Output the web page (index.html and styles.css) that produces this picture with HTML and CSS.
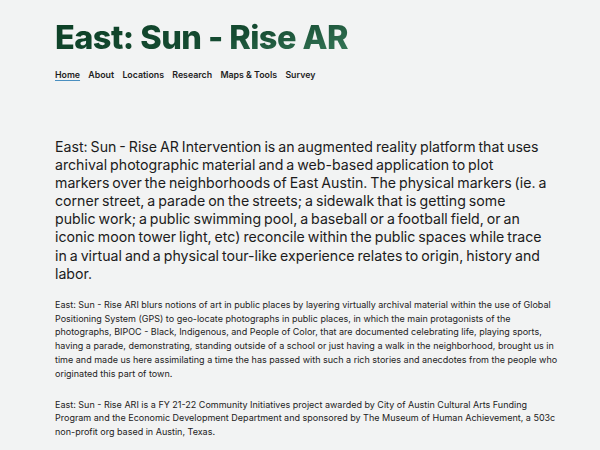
FILE: index.html
```html
<!DOCTYPE html>
<html lang="en">
<head>
<meta charset="utf-8">
<title>East: Sun - Rise AR</title>
<link rel="stylesheet" href="styles.css">
</head>
<body>
<div class="page">
  <header class="header">
    <h1 class="title">East: Sun - Rise AR</h1>
    <nav class="nav">
      <a class="nav-link active" href="#">Home</a>
      <a class="nav-link" href="#">About</a>
      <a class="nav-link" href="#">Locations</a>
      <a class="nav-link" href="#">Research</a>
      <a class="nav-link" href="#">Maps &amp; Tools</a>
      <a class="nav-link" href="#">Survey</a>
    </nav>
  </header>
  <main class="content">
    <p class="lead">East: Sun - Rise AR Intervention is an augmented reality platform that uses archival photographic material and a web-based application to plot markers over the neighborhoods of East Austin. The physical markers (ie. a corner street, a parade on the streets; a sidewalk that is getting some public work; a public swimming pool, a baseball or a football field, or an iconic moon tower light, etc) reconcile within the public spaces while trace in a virtual and a physical tour-like experience relates to origin, history and labor.</p>
    <p class="body">East: Sun - Rise ARI blurs notions of art in public places by layering virtually archival material within the use of Global Positioning System (GPS) to geo-locate photographs in public places, in which the main protagonists of the photographs, BIPOC - Black, Indigenous, and People of Color, that are documented celebrating life, playing sports, having a parade, demonstrating, standing outside of a school or just having a walk in the neighborhood, brought us in time and made us here assimilating a time the has passed with such a rich stories and anecdotes from the people who originated this part of town.</p>
    <p class="body">East: Sun - Rise ARI is a FY 21-22 Community Initiatives project awarded by City of Austin Cultural Arts Funding Program and the Economic Development Department and sponsored by The Museum of Human Achievement, a 503c non-profit org based in Austin, Texas.</p>
  </main>
</div>
</body>
</html>
```
FILE: styles.css
```css
html, body {
  margin: 0;
  padding: 0;
  background: #f2f3f3;
}
body {
  font-family: Inter, "Liberation Sans", sans-serif;
  color: #1e1e1e;
}
.page {
  padding: 18px 45px 0 55px;
}
.header {
  display: flex;
  flex-direction: column;
}
.title {
  margin: 0;
  font-size: 32.5px;
  line-height: 40px;
  font-weight: 800;
  letter-spacing: -0.55px;
  background: linear-gradient(165deg, #0c3f25 0%, #154b31 55%, #3a7c5c 100%);
  -webkit-background-clip: text;
  background-clip: text;
  color: transparent;
  align-self: flex-start;
}
.nav {
  display: flex;
  gap: 8.3px;
  margin-top: 10px;
}
.nav-link {
  font-size: 8.8px;
  font-weight: 600;
  color: #1e1e1e;
  text-decoration: none;
  line-height: 14px;
}
.nav-link.active {
  text-decoration: underline;
  text-decoration-color: #4a8fc0;
  text-underline-offset: 2px;
}
.content {
  margin-top: 56px;
}
.lead {
  margin: 0 8px 0 0;
  font-size: 14.15px;
  line-height: 18.1px;
  word-spacing: -1px;
  color: #1c1c1c;
}
.body {
  margin: 15px -3px 0 0;
  font-size: 9px;
  line-height: 13.8px;
  color: #222;
}
.body + .body {
  margin-top: 17px;
}
```
